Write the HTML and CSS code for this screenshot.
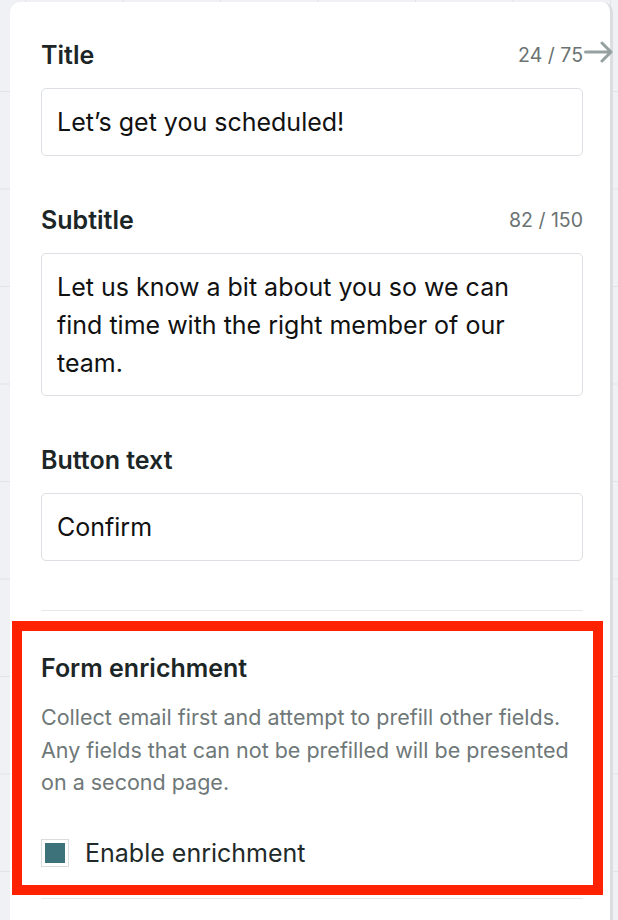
FILE: index.html
```html
<!DOCTYPE html>
<html lang="en">
<head>
  <meta charset="UTF-8">
  <meta name="viewport" content="width=device-width, initial-scale=1.0">
  <title>Form settings</title>
  <link rel="stylesheet" href="styles.css">
</head>
<body>
  <div class="panel">
    <svg class="collapse" width="30" height="22" viewBox="0 0 30 22">
      <path d="M1.5 11h25.5M18 2l9 9-9 9" fill="none" stroke="#95a0a0" stroke-width="3" stroke-linecap="round" stroke-linejoin="round"/>
    </svg>

    <div class="field">
      <div class="field-head">
        <label>Title</label>
        <span class="count">24 / 75</span>
      </div>
      <div class="input">Let’s get you scheduled!</div>
    </div>

    <div class="field">
      <div class="field-head">
        <label>Subtitle</label>
        <span class="count">82 / 150</span>
      </div>
      <div class="input textarea">Let us know a bit about you so we can find time with the right member of our team.</div>
    </div>

    <div class="field">
      <div class="field-head">
        <label>Button text</label>
      </div>
      <div class="input">Confirm</div>
    </div>

    <hr class="divider">

    <div class="highlight">
      <h3>Form enrichment</h3>
      <p class="help">Collect email first and attempt to prefill other fields. Any fields that can not be prefilled will be presented on a second page.</p>
      <div class="check">
        <span class="box"><span class="tick"></span></span>
        <span>Enable enrichment</span>
      </div>
    </div>

    <hr class="divider bottom">
  </div>
</body>
</html>
```

FILE: styles.css
```css
body {
  margin: 0;
  font-family: Inter, "Noto Sans", sans-serif;
  background-color: #f0f1f5;
  background-image:
    linear-gradient(to right, #e2e3e8 1px, transparent 1px),
    linear-gradient(to bottom, #e2e3e8 1px, transparent 1px);
  background-size: 97.5px 97.5px;
  background-position: 25px 91px;
  height: 920px;
  overflow: hidden;
}
.panel {
  position: relative;
  margin: 2px 0 0 10px;
  width: 603px;
  height: 960px;
  box-sizing: border-box;
  padding: 38px 27px 0 31px;
  background: white;
  border-radius: 10px 10px 0 0;
  border-right: 3px solid #dcdde1;
}
.collapse {
  position: absolute;
  top: 39px;
  right: -4px;
}
.field {
  margin-bottom: 49px;
}
.field-head {
  display: flex;
  justify-content: space-between;
  align-items: center;
  height: 30px;
  margin-bottom: 18px;
}
.field-head label {
  font-size: 25px;
  font-weight: 600;
  color: #1c2626;
}
.count {
  font-size: 19.5px;
  color: #6a7272;
}
.input {
  border: 1px solid #dcdfe3;
  border-radius: 5px;
  padding: 0 15px;
  height: 66px;
  display: flex;
  align-items: center;
  font-size: 25px;
  color: #111;
}
.textarea {
  display: block;
  height: auto;
  padding: 14px 36px 13px 15px;
  line-height: 38px;
}
.divider {
  border: none;
  border-top: 1px solid #e6e8eb;
  margin: 0;
}
.highlight {
  margin: 10px -20px 3px -29px;
  border: 10px solid #ff2200;
  padding: 22px 19px 17px;
}
.highlight h3 {
  margin: 0;
  font-size: 25px;
  font-weight: 600;
  line-height: 30px;
  color: #1c2626;
}
.help {
  margin: 18px 0 0;
  font-size: 21.5px;
  line-height: 32.5px;
  color: #6f7878;
}
.check {
  display: flex;
  align-items: center;
  gap: 16px;
  margin-top: 39px;
  font-size: 25px;
  color: #1f2a2a;
}
.box {
  width: 26px;
  height: 26px;
  border: 1px solid #d8dcdc;
  display: flex;
  align-items: center;
  justify-content: center;
}
.tick {
  width: 20px;
  height: 20px;
  background: #3e727a;
}
```
